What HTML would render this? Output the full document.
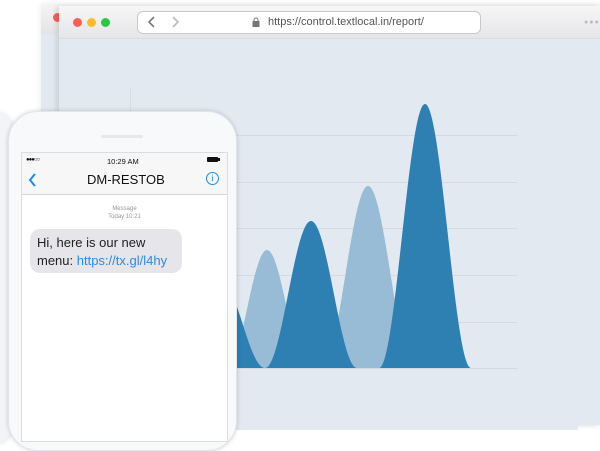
<!DOCTYPE html>
<html><head><meta charset="utf-8"><style>
*{margin:0;padding:0;box-sizing:border-box}
body{width:600px;height:430px;overflow:hidden;background:#fff;position:relative;font-family:"Liberation Sans",sans-serif}
.abs{position:absolute}
</style></head><body>
<div class="abs" style="left:41px;top:4px;width:560px;height:421px;background:#e2e9f1;box-shadow:0 0 6px rgba(0,0,0,.08)"></div>
<div class="abs" style="left:41px;top:4px;width:560px;height:30px;background:linear-gradient(#f4f4f5,#e4e4e6)"></div>
<div class="abs" style="left:53px;top:13px;width:9px;height:9px;border-radius:50%;background:#fc5f57"></div>
<div class="abs" style="left:59px;top:6px;width:541px;height:419px;background:#e2e9f1;box-shadow:-3px 0 5px rgba(0,0,0,.1)"></div>
<div class="abs" style="left:59px;top:6px;width:541px;height:33px;background:linear-gradient(#f6f6f7,#e6e6e8);border-bottom:1px solid #dcdcdf"></div>
<div class="abs" style="left:73px;top:18px;width:9px;height:9px;border-radius:50%;background:#fc5f57"></div>
<div class="abs" style="left:87px;top:18px;width:9px;height:9px;border-radius:50%;background:#fdbc2e"></div>
<div class="abs" style="left:101px;top:18px;width:9px;height:9px;border-radius:50%;background:#2ac840"></div>
<div class="abs" style="left:137px;top:11px;width:344px;height:23px;border:1px solid #c8c8cc;border-radius:6px;background:#fff"></div>
<svg class="abs" style="left:146px;top:15px" width="34" height="14"><path d="M8 2 L3 7 L8 12" stroke="#777" stroke-width="1.6" fill="none"/><path d="M27 2 L32 7 L27 12" stroke="#bbb" stroke-width="1.6" fill="none"/></svg>
<svg class="abs" style="left:252px;top:17px" width="8" height="10"><rect x="0.5" y="4" width="7" height="6" fill="#777"/><path d="M2 4.5V3a2 2 0 0 1 4 0v1.5" stroke="#777" fill="none"/></svg>
<div class="abs" style="left:268px;top:16px;font-size:11px;color:#555">https://control.textlocal.in/report/</div>
<div class="abs" style="left:584px;top:19px;font-size:7px;color:#bbb;letter-spacing:1px">●●●</div>
<div class="abs" style="left:130px;top:88px;width:1px;height:44px;background:#d6dde5"></div>
<svg class="abs" style="left:0;top:0" width="600" height="430">
<g stroke="#d3dae3" stroke-width="1"><line x1="236" y1="135.5" x2="517" y2="135.5"/><line x1="236" y1="182.5" x2="517" y2="182.5"/><line x1="236" y1="228.5" x2="517" y2="228.5"/><line x1="236" y1="275.5" x2="517" y2="275.5"/><line x1="236" y1="322.5" x2="517" y2="322.5"/><line x1="236" y1="368.5" x2="517" y2="368.5"/></g>
<path id="p2" fill="#99bcd6"/>
<path id="p4" fill="#99bcd6"/>
<path id="p1" fill="#2e80b3"/>
<path id="p3" fill="#2e80b3"/>
<path id="p5" fill="#2e80b3"/>
</svg>
<script>
var B=368;
function g(id,c,h,w){var x0=Math.max(c-w,236),x1=c+w;var d="M"+x0+" "+B;for(var x=x0;x<=x1;x+=0.5){var y=B-h*(1+Math.cos(Math.PI*(x-c)/w))/2;d+=" L"+x+" "+y.toFixed(1);}d+=" L"+x1+" "+B+"Z";document.getElementById(id).setAttribute("d",d);}
g("p1",220,89,45);
g("p2",267,118,40);
g("p3",311,147,46);
g("p4",368,182,46);
g("p5",425,264,46);
</script>
<div class="abs" style="left:210px;top:425px;width:368px;height:5px;background:#e2e9f1"></div>
<div class="abs" style="left:-20px;top:113px;width:32px;height:330px;border-radius:28px;background:#f3f4f7;box-shadow:0 0 6px rgba(0,0,0,.15)"></div>
<div class="abs" style="left:8px;top:111px;width:229px;height:340px;border-radius:30px;background:#f8f9fb;box-shadow:0 0 5px rgba(0,0,0,.18);border:1px solid #e3e5ea"></div>
<div class="abs" style="left:101px;top:135px;width:42px;height:3px;border-radius:2px;background:#e6e8ec"></div>
<div class="abs" style="left:21px;top:152px;width:207px;height:290px;background:#fff;border:1px solid #dcdde0"></div>
<div class="abs" style="left:22px;top:153px;width:205px;height:42px;background:#f7f7f7;border-bottom:1px solid #d6d6d8"></div>
<div class="abs" style="left:26px;top:157px;font-size:6px;color:#111;letter-spacing:-1px">●●●○○</div>
<div class="abs" style="left:107px;top:157px;font-size:7.5px;color:#111">10:29 AM</div>
<div class="abs" style="left:207px;top:157px;width:11px;height:5px;background:#111;border-radius:1px"></div>
<div class="abs" style="left:218px;top:158px;width:1.5px;height:3px;background:#111"></div>
<svg class="abs" style="left:27px;top:172px" width="10" height="16"><path d="M8 2 L3 8 L8 14" stroke="#1a8cf0" stroke-width="2" fill="none"/></svg>
<div class="abs" style="left:87px;top:172px;font-size:13px;color:#111">DM-RESTOB</div>
<div class="abs" style="left:206px;top:172px;width:13px;height:13px;border:1px solid #1a8cf0;border-radius:50%;color:#1a8cf0;font-size:9px;text-align:center;line-height:11px;font-family:'Liberation Serif',serif">i</div>
<div class="abs" style="left:22px;top:205px;width:205px;text-align:center;font-size:6px;color:#999;line-height:8px">Message<br>Today 10:21</div>
<div class="abs" style="left:30px;top:229px;width:152px;height:44px;background:#e5e5ea;border-radius:10px;padding:5px 0 0 7px;font-size:13px;line-height:18px;color:#222">Hi, here is our new<br>menu: <span style="color:#2a8ae6">https://tx.gl/l4hy</span></div>
</body></html>
